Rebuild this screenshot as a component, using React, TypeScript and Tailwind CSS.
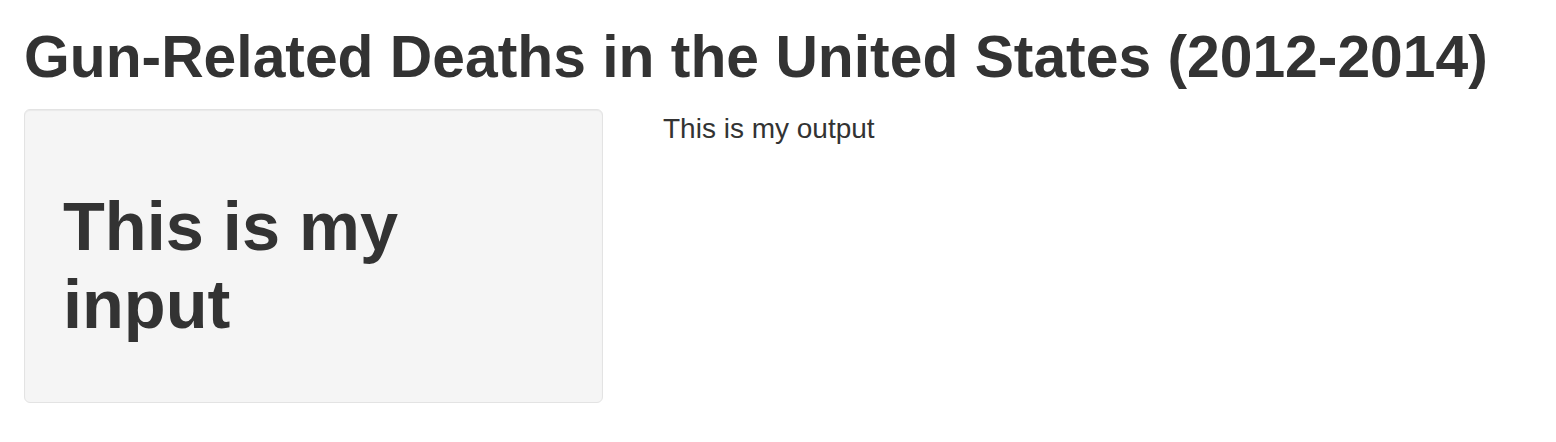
export default function App() {
  return (
    <div className="min-h-screen bg-white px-6 text-[#333] [font-family:'Liberation_Sans',Arial,sans-serif]">
      <h2 className="pt-6 pb-[19px] text-[58.8px] font-bold leading-[66px]">
        Gun-Related Deaths in the United States (2012-2014)
      </h2>

      <div className="flex gap-[60px]">
        <div className="w-[579px] shrink-0 rounded-md border border-[#e3e3e3] bg-[#f5f5f5] p-[38px] shadow-[inset_0_1px_1px_rgba(0,0,0,0.05)]">
          <h1 className="mt-10 mb-5 text-[68.5px] font-bold leading-[78px]">
            This is my input
          </h1>
        </div>

        <div className="text-[28px] leading-10">This is my output</div>
      </div>
    </div>
  );
}
